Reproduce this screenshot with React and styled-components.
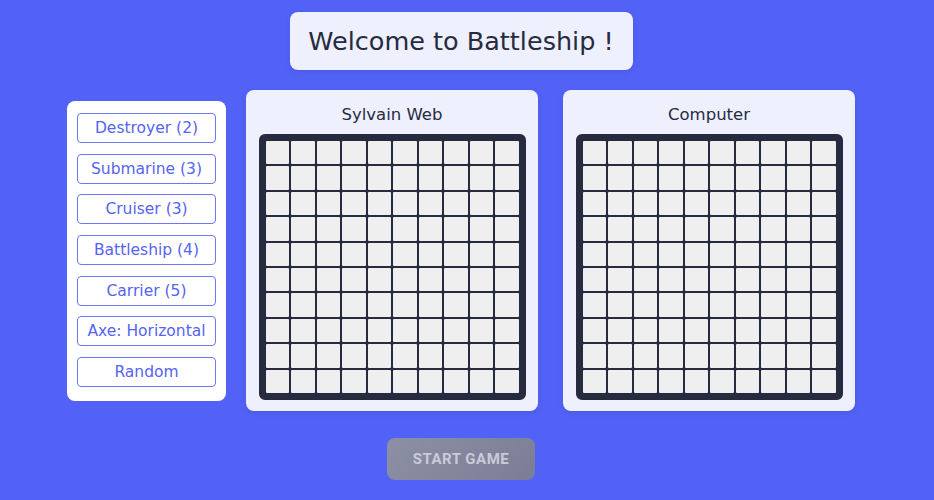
import React from 'react'
import styled, { createGlobalStyle } from 'styled-components'

const ships = ['Destroyer (2)', 'Submarine (3)', 'Cruiser (3)', 'Battleship (4)', 'Carrier (5)']
const cells = Array.from({ length: 100 }, (_, i) => i)

const Board = ({ name }) => (
  <BoardCard>
    <BoardTitle>{name}</BoardTitle>
    <Grid>
      {cells.map(i => <Cell key={i} />)}
    </Grid>
  </BoardCard>
)

const App = () => {
  return (
    <Page>
      <GlobalStyle />
      <Header>Welcome to Battleship !</Header>
      <Main>
        <Sidebar>
          {ships.map(s => <ShipButton key={s}>{s}</ShipButton>)}
          <ShipButton>Axe: Horizontal</ShipButton>
          <ShipButton>Random</ShipButton>
        </Sidebar>
        <Board name='Sylvain Web' />
        <Board name='Computer' />
      </Main>
      <StartButton disabled>Start game</StartButton>
    </Page>
  )
}

const GlobalStyle = createGlobalStyle`
  body {
    margin: 0;
    background: #5262f6;
    font-family: "DejaVu Sans", "Open Sans", sans-serif;
  }
`

const Page = styled.div`
  display: flex;
  flex-direction: column;
  align-items: center;
  padding: 12px 12px 0 0;
  min-height: 500px;
  box-sizing: border-box;
`

const Header = styled.h1`
  margin: 0;
  width: 343px;
  height: 58px;
  box-sizing: border-box;
  display: flex;
  align-items: center;
  justify-content: center;
  background: #eef0fd;
  border-radius: 8px;
  color: #272b40;
  font-size: 25.5px;
  font-weight: 400;
  box-shadow: 0 2px 6px rgba(0, 0, 0, 0.08);
`

const Main = styled.div`
  display: flex;
  align-items: flex-start;
  margin-top: 20px;
`

const Sidebar = styled.div`
  width: 159px;
  box-sizing: border-box;
  margin-top: 11px;
  margin-right: 20px;
  padding: 12px 10px 14px;
  background: #ffffff;
  border-radius: 8px;
  display: flex;
  flex-direction: column;
  gap: 10.7px;
`

const ShipButton = styled.button`
  height: 30px;
  background: #ffffff;
  border: 1px solid #6c78f6;
  border-radius: 4px;
  color: #5664f0;
  font-family: inherit;
  font-size: 15.5px;
  padding: 0;
  white-space: nowrap;
  cursor: pointer;
`

const BoardCard = styled.div`
  width: 292px;
  height: 321px;
  box-sizing: border-box;
  margin-right: 25px;
  padding: 12px 12px 0;
  background: #eef0fd;
  border-radius: 8px;
  display: flex;
  flex-direction: column;
  align-items: center;
  box-shadow: 0 2px 6px rgba(0, 0, 0, 0.08);

  &:last-child {
    margin-right: 0;
  }
`

const BoardTitle = styled.div`
  color: #272b40;
  font-size: 16.5px;
  line-height: 26px;
  height: 32px;
`

const Grid = styled.div`
  width: 267px;
  height: 266px;
  box-sizing: border-box;
  border: 5px solid #272b40;
  border-radius: 6px;
  padding: 2px;
  background: #272b40;
  display: grid;
  grid-template-columns: repeat(10, 1fr);
  grid-template-rows: repeat(10, 1fr);
  gap: 2px;
`

const Cell = styled.div`
  background: #efefef;
  border-radius: 1px;
`

const StartButton = styled.button`
  margin-top: 27px;
  width: 148px;
  height: 42px;
  border: none;
  border-radius: 8px;
  background: linear-gradient(135deg, #8d8fa3, #7b7d96);
  color: #c9cbd8;
  font-family: Roboto, sans-serif;
  font-weight: 700;
  font-size: 15px;
  letter-spacing: 0.5px;
  text-transform: uppercase;
`

export default App
